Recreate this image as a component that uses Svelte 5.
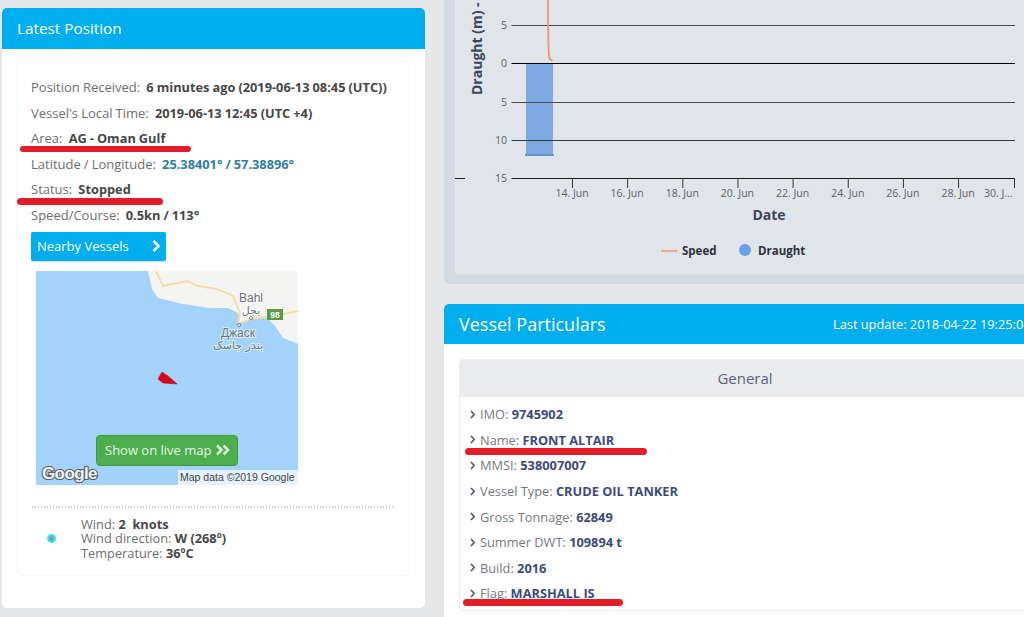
<script lang="ts">
  const positionRows = [
    { label: "Position Received:", value: "6 minutes ago (2019-06-13 08:45 (UTC))" },
    { label: "Vessel's Local Time:", value: "2019-06-13 12:45 (UTC +4)" },
    { label: "Area:", value: "AG - Oman Gulf", mark: "area" },
    { label: "Latitude / Longitude:", value: "25.38401° / 57.38896°", link: true },
    { label: "Status:", value: "Stopped", mark: "status" },
    { label: "Speed/Course:", value: "0.5kn / 113°" },
  ];

  const particulars = [
    { label: "IMO:", value: "9745902" },
    { label: "Name:", value: "FRONT ALTAIR", mark: "name" },
    { label: "MMSI:", value: "538007007" },
    { label: "Vessel Type:", value: "CRUDE OIL TANKER" },
    { label: "Gross Tonnage:", value: "62849" },
    { label: "Summer DWT:", value: "109894 t" },
    { label: "Build:", value: "2016" },
    { label: "Flag:", value: "MARSHALL IS", mark: "flag" },
  ];

  // chart coordinates are page pixels, the svg viewBox starts at the panel corner
  const yTicks = [
    { y: 25, label: "5", color: "#4a4a4a" },
    { y: 63, label: "0", color: "#000" },
    { y: 102, label: "5", color: "#4a4a4a" },
    { y: 140, label: "10", color: "#3a3a3a" },
    { y: 178, label: "15", color: "#1a1a1a" },
  ];
  const xTicks = ["14. Jun", "16. Jun", "18. Jun", "20. Jun", "22. Jun", "24. Jun", "26. Jun", "28. Jun"].map(
    (label, i) => ({ label, x: 572 + i * 55.15 })
  );
</script>

<div class="page">
  <section class="card left">
    <header class="card-head"><h2>Latest Position</h2></header>
    <div class="pos-box">
      <ul class="pos-rows">
        {#each positionRows as row}
          <li>
            {row.label}&nbsp; <b class:link={row.link}>{row.value}</b>
            {#if row.mark}<i class="mark {row.mark}"></i>{/if}
          </li>
        {/each}
      </ul>

      <button class="nearby">
        Nearby Vessels
        <svg width="12" height="14" viewBox="0 0 12 14"><path d="M3.500 2 8.500 7l-5 5" fill="none" stroke="#fff" stroke-width="2.600"/></svg>
      </button>

      <div class="map">
        <svg class="terrain" width="262" height="214" viewBox="0 0 262 214">
          <path d="M112 0 116 18 122 27 147 33 174 37 192 37 202 42 204 48 202 52 214 48 231 47 239 55 247 67 263 73V0Z" fill="#f4f4f2"/>
          <path d="M120 0 127 15 151 10 161 15 181 18 197 25 204 42 202 52" fill="none" stroke="#f6dd9c" stroke-width="1.800"/>
          <path d="M206 52 216 47 237 45 263 40" fill="none" stroke="#f6dd9c" stroke-width="1.800"/>
          <path d="M122 108 126 101 132 105 141 113 127 112Z" fill="#dc0612" stroke="#8a1018" stroke-width=".5"/>
          <circle cx="215" cy="47" r="1.500" fill="#fff" stroke="#666" stroke-width=".8"/>
          <circle cx="203" cy="54" r="1.500" fill="#fff" stroke="#666" stroke-width=".8"/>
          <g class="place">
            <text class="latin" x="215" y="31" font-size="12">Bahl</text>
            <text x="215" y="43" font-size="11">بجل</text>
            <text class="latin" x="202" y="66" font-size="12">Джаск</text>
            <text x="202" y="78" font-size="11">بندر جاسک</text>
          </g>
          <rect x="231" y="38" width="16" height="11" fill="#5c9a48"/>
          <text class="shield" x="239" y="46.500">98</text>
        </svg>
        <button class="live">Show on live map
          <svg width="16" height="12" viewBox="0 0 16 12"><path d="M2 1.500 6.500 6 2 10.500M8.500 1.500 13 6l-4.500 4.500" fill="none" stroke="#d9efd6" stroke-width="2.600"/></svg>
        </button>
        <span class="google">Google</span>
        <span class="map-data">Map data ©2019 Google</span>
      </div>

      <div class="weather">
        <span class="dot"></span>
        <div class="weather-text">
          <div>Wind: <b>2&nbsp; knots</b></div>
          <div>Wind direction: <b>W (268º)</b></div>
          <div>Temperature: <b>36ºC</b></div>
        </div>
      </div>
    </div>
  </section>

  <div class="right">
    <section class="chart-panel">
      <svg class="chart" width="569" height="274" viewBox="455 0 569 274">
        <line x1="455" x2="465" y1="178.500" y2="178.500" stroke="#222"/>
        <rect x="526" y="63" width="27" height="92" fill="#7eaae4"/>
        <rect x="525" y="154" width="29" height="2" fill="#5f93db"/>
        {#each yTicks as t}
          <line x1="511.500" x2="1015" y1={t.y + 0.5} y2={t.y + 0.5} stroke={t.color}/>
          <text class="tick" x="507" y={t.y + 4} text-anchor="end">{t.label}</text>
        {/each}
        {#each xTicks as t}
          <line x1={t.x + 0.5} x2={t.x + 0.5} y1="178" y2="188" stroke="#333"/>
          <text class="tick" x={t.x} y="197" text-anchor="middle">{t.label}</text>
        {/each}
        <line x1="1014.500" x2="1014.500" y1="178" y2="188" stroke="#333"/>
        <text class="tick" x="984" y="197">30. J...</text>
        <path d="M548 0C548 20 548 40 549 57 550 60 552 60 552 61" fill="none" stroke="#ec9472" stroke-width="1.800"/>
        <text class="axis-title" transform="translate(482 95) rotate(-90)">Draught (m) -</text>
        <text class="axis-title" x="769" y="220" text-anchor="middle">Date</text>
        <line x1="661" x2="677" y1="251" y2="251" stroke="#ec9472" stroke-width="1.500"/>
        <text class="legend" x="682" y="255">Speed</text>
        <circle cx="745" cy="250" r="6" fill="#6aa0e6"/>
        <text class="legend" x="758" y="255">Draught</text>
      </svg>
    </section>

    <section class="card particulars">
      <header class="card-head">
        <h2>Vessel Particulars</h2>
        <span class="updated">Last update: 2018-04-22 19:25:04</span>
      </header>
      <div class="general">
        <h3>General</h3>
        <ul>
          {#each particulars as row}
            <li>
              <svg width="6" height="9" viewBox="0 0 6 9"><path d="M1 1l3.200 3.500L1 8" fill="none" stroke="#4a5260" stroke-width="1.500"/></svg>
              <span>{row.label} <b>{row.value}</b></span>
              {#if row.mark}<i class="mark {row.mark}"></i>{/if}
            </li>
          {/each}
        </ul>
      </div>
    </section>
  </div>
</div>

<style>
  :global(body) { margin: 0; background: #e5e7e9; }

  .page {
    display: flex;
    gap: 19px;
    width: 1024px;
    height: 617px;
    padding-left: 2px;
    box-sizing: border-box;
    overflow: hidden;
    font-family: "Open Sans", sans-serif;
    color: #6e6e6e;
  }

  .card { background: #fff; border-radius: 5px; }
  .card-head {
    display: flex;
    align-items: center;
    justify-content: space-between;
    background: #00adef;
    color: #fff;
    border-radius: 5px 5px 0 0;
    white-space: nowrap;
  }
  h2 { margin: 0; font-weight: 400; }

  /* Left card */
  .left { flex: 0 0 423px; min-width: 0; height: 600px; margin-top: 8px; }
  .left .card-head { height: 41px; padding: 0 0 2px 15px; box-sizing: border-box; }
  .left h2 { font-size: 15.300px; }

  .pos-box {
    margin: 11px 15px 0 14px;
    height: 516px;
    padding: 14px 14px 0;
    box-sizing: border-box;
    border: 1px solid #f6f7f7;
    border-radius: 6px;
    font-size: 13px;
  }
  ul { list-style: none; margin: 0; padding: 0; }
  .pos-rows li { position: relative; height: 25.6px; line-height: 25.6px; white-space: nowrap; word-spacing: -.3px; }
  .pos-rows b { font-size: 12.800px; font-weight: 700; color: #474747; }
  .pos-rows b.link { color: #2f7f9f; }

  .mark { position: absolute; background: #e21c28; border-radius: 4px; }
  .mark.area { left: -11px; top: 20px; width: 171px; height: 6px; }
  .mark.status { left: -14px; top: 21px; width: 146px; height: 7px; }
  .mark.name { left: -5px; top: 21px; width: 182px; height: 7px; }
  .mark.flag { left: -7px; top: 18px; width: 160px; height: 7px; }

  .nearby {
    display: flex;
    align-items: center;
    justify-content: space-between;
    width: 135px;
    height: 29px;
    margin-top: 3px;
    padding: 0 4px 0 6px;
    border: 0;
    border-radius: 2px;
    background: #00adef;
    color: #fff;
    font: 13px "Open Sans", sans-serif;
    box-shadow: 0 1px 1px rgba(0, 0, 0, .15);
  }

  .map {
    position: relative;
    width: 262px;
    height: 214px;
    margin: 10px 0 0 5px;
    background: #a3d3fb;
    overflow: hidden;
  }
  .terrain { display: block; }
  .place text {
    font-family: "DejaVu Sans", sans-serif;
    text-anchor: middle;
    fill: #6f7478;
    stroke: #fff;
    stroke-width: 2px;
    stroke-opacity: .55;
    paint-order: stroke;
  }
  .place text.latin { font-family: "Liberation Sans", sans-serif; }
  .shield { font: 700 8.5px "Liberation Sans", sans-serif; fill: #fff; text-anchor: middle; }
  .live {
    position: absolute;
    left: 60px;
    top: 164px;
    display: flex;
    align-items: center;
    gap: 3px;
    width: 142px;
    height: 31px;
    padding: 0 0 0 8px;
    box-sizing: border-box;
    border: 1px solid #3f9a3f;
    border-radius: 4px;
    background: #4cae4c;
    color: #e8f5e6;
    font: 13px "Open Sans", sans-serif;
    white-space: nowrap;
  }
  .google {
    position: absolute;
    left: 6px;
    top: 192px;
    font: 700 17px/22px "Liberation Sans", sans-serif;
    letter-spacing: -.6px;
    color: #f2f4f5;
    -webkit-text-stroke: 2.2px #5b6065;
    paint-order: stroke fill;
  }
  .map-data {
    position: absolute;
    right: 0;
    bottom: 0;
    width: 120px;
    height: 15px;
    padding-left: 2px;
    box-sizing: border-box;
    background: rgba(255, 255, 255, .72);
    color: #444;
    font: 10.5px/15px "Liberation Sans", sans-serif;
    white-space: nowrap;
  }

  .weather {
    display: flex;
    align-items: center;
    width: 364px;
    margin-top: 21px;
    padding-top: 11px;
    background: radial-gradient(circle, #c4c4c4 .6px, transparent .8px) left top / 3px 2px repeat-x;
  }
  .dot {
    flex: none;
    width: 5px;
    height: 5px;
    margin: 0 25px 0 16px;
    border: 2px solid #3fe3ee;
    border-radius: 50%;
    background: #6fa8b8;
  }
  .weather-text { line-height: 14.7px; font-size: 12.800px; }
  .weather-text b { color: #474747; }

  /* Right column */
  .right { flex: none; width: 600px; }
  .chart-panel {
    height: 274px;
    padding: 0 0 10px 11px;
    margin-bottom: 20px;
    background: #d3dae4;
    border-radius: 0 0 0 6px;
  }
  .chart { display: block; background: #e0e5e9; }
  .tick { font-size: 10.5px; fill: #5c6066; }
  .axis-title { font-size: 14px; font-weight: 700; fill: #3a4560; }
  .legend { font-size: 11.500px; font-weight: 700; fill: #2e3340; }

  .particulars { height: 320px; border-radius: 5px 0 0 0; }
  .particulars .card-head { height: 40px; padding: 0 0 0 15px; overflow: hidden; }
  .particulars h2 { font-size: 18px; }
  .updated { font-size: 12.800px; margin-left: auto; width: 211px; flex: none; }

  .general {
    margin: 15px 0 0 15px;
    height: 250px;
    border: 1px solid #e8eaec;
    border-radius: 5px 0 0 5px;
  }
  h3 {
    margin: 0;
    height: 37px;
    line-height: 37px;
    text-align: center;
    width: 570px;
    background: #e9ebed;
    font-size: 15px;
    font-weight: 400;
    color: #5b6480;
  }
  .general ul { padding: 4.500px 0 0 10px; font-size: 12.800px; color: #747a80; }
  .general li { position: relative; display: flex; align-items: center; gap: 4px; height: 25.6px; white-space: nowrap; }
  .general b { color: #3c4a7c; }
</style>
